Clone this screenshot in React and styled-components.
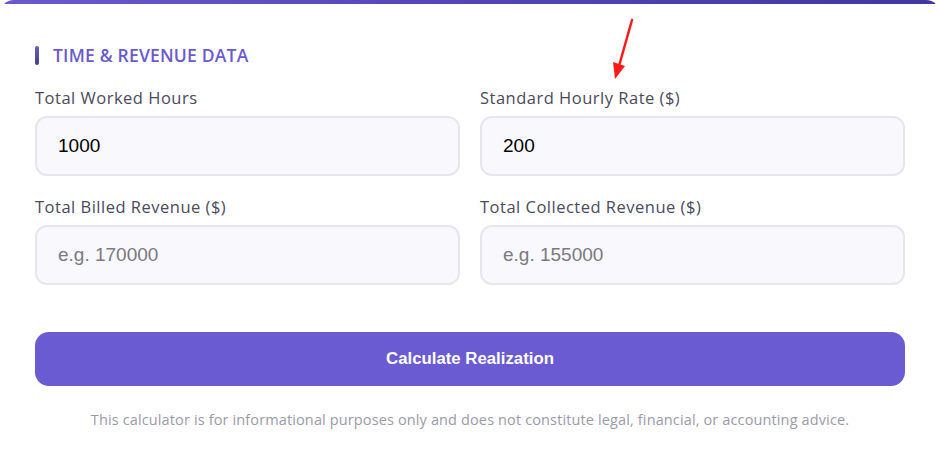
import React from 'react';
import styled, { createGlobalStyle } from 'styled-components';

const GlobalStyle = createGlobalStyle`
  * { box-sizing: border-box; }
  html, body { margin: 0; padding: 0; background: #ffffff; }
  body { font-family: "Open Sans", "Lato", sans-serif; }
`;

export default function App() {
  return (
    <>
      <GlobalStyle />
      <Card>
        <SectionTitle>Time &amp; Revenue Data</SectionTitle>
        <FieldGrid>
          <Field>
            <Label>Total Worked Hours</Label>
            <Input type="text" defaultValue="1000" />
          </Field>
          <Field>
            <Label>Standard Hourly Rate ($)</Label>
            <Input type="text" defaultValue="200" />
          </Field>
          <Field>
            <Label>Total Billed Revenue ($)</Label>
            <Input type="text" placeholder="e.g. 170000" />
          </Field>
          <Field>
            <Label>Total Collected Revenue ($)</Label>
            <Input type="text" placeholder="e.g. 155000" />
          </Field>
        </FieldGrid>
        <CalcButton>Calculate Realization</CalcButton>
        <Disclaimer>
          This calculator is for informational purposes only and does not constitute legal, financial, or accounting advice.
        </Disclaimer>
        <Arrow width="30" height="64" viewBox="0 0 30 64">
          <line x1="26" y1="2" x2="13" y2="48" stroke="#ff1a1a" strokeWidth="2.5" strokeLinecap="round" />
          <polygon points="7,44 19,48 9,61" fill="#ff1a1a" />
        </Arrow>
      </Card>
    </>
  );
}

const Card = styled.div`
  position: relative;
  width: 940px;
  min-height: 464px;
  background: #ffffff;
  border-radius: 14px;
  overflow: hidden;
  padding: 44px 35px 30px 35px;
  &::before {
    content: '';
    position: absolute;
    top: 0;
    left: 0;
    right: 0;
    height: 4px;
    background: linear-gradient(90deg, #6a5acd 0%, #5446b8 50%, #40379f 100%);
  }
`;

const SectionTitle = styled.h3`
  margin: 0 0 21px 0;
  display: flex;
  align-items: center;
  gap: 14px;
  font-size: 17.5px;
  font-weight: 600;
  letter-spacing: 0.2px;
  text-transform: uppercase;
  color: #6a5acd;
  line-height: 22px;
  &::before {
    content: '';
    width: 4px;
    height: 19px;
    border-radius: 2px;
    background: linear-gradient(180deg, #6a5acd, #483d8b);
  }
`;

const FieldGrid = styled.div`
  display: grid;
  grid-template-columns: 1fr 1fr;
  column-gap: 20px;
  row-gap: 20px;
`;

const Field = styled.div`
  display: flex;
  flex-direction: column;
  gap: 7px;
`;

const Label = styled.label`
  font-size: 16.5px;
  letter-spacing: 0.5px;
  color: #4a4a5c;
  line-height: 22px;
`;

const Input = styled.input`
  height: 60px;
  width: 100%;
  padding: 0 21px;
  border: 2px solid #e6e6f0;
  border-radius: 12px;
  background: #f9f8fc;
  font-family: "Liberation Sans", Arial, sans-serif;
  font-size: 19px;
  color: #000000;
  outline: none;
  &::placeholder {
    color: #7a7a80;
  }
`;

const CalcButton = styled.button`
  display: block;
  width: 100%;
  height: 54px;
  margin-top: 47px;
  border: none;
  border-radius: 14px;
  background: #6a5bd3;
  color: #ffffff;
  font-family: "Liberation Sans", Arial, sans-serif;
  font-size: 16.8px;
  font-weight: 700;
  cursor: pointer;
`;

const Disclaimer = styled.p`
  margin: 24px 0 0 0;
  text-align: center;
  font-size: 14.5px;
  letter-spacing: 0.13px;
  color: #9a9aaa;
`;

const Arrow = styled.svg`
  position: absolute;
  left: 606px;
  top: 18px;
`;
